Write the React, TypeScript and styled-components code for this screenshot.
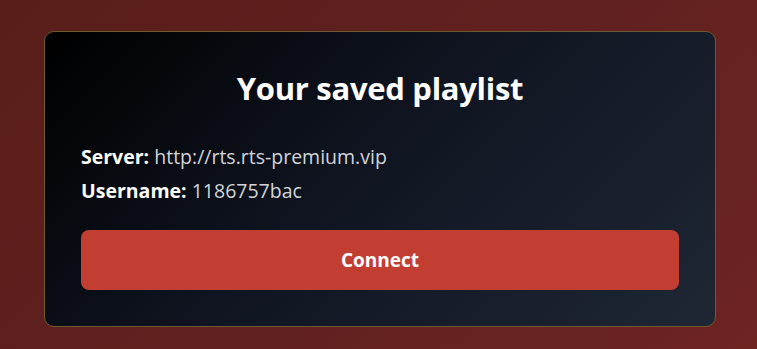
import React from 'react';
import styled, { createGlobalStyle } from 'styled-components';

const GlobalStyle = createGlobalStyle`
  html, body {
    margin: 0;
    padding: 0;
    height: 100%;
  }
  body {
    background: linear-gradient(135deg, #591e1a 0%, #612120 55%, #6e2421 100%);
    font-family: "Open Sans", "Noto Sans", sans-serif;
  }
`;

const Page = styled.div`
  min-height: 349px;
  box-sizing: border-box;
  padding: 31px 41px 0 44px;
`;

const Card = styled.section`
  box-sizing: border-box;
  width: 672px;
  height: 296px;
  padding: 36px 36px 36px;
  border: 1px solid #6e5a2c;
  border-radius: 10px;
  background: linear-gradient(135deg, #000000 0%, #0f1420 45%, #1f2734 100%);
  display: flex;
  flex-direction: column;
`;

const Title = styled.h1`
  margin: 0 0 35px;
  text-align: center;
  color: #ffffff;
  font-size: 31px;
  line-height: 40px;
  font-weight: 700;
  letter-spacing: -0.3px;
`;

const InfoList = styled.div`
  display: flex;
  flex-direction: column;
  gap: 6px;
  margin-bottom: 25px;
`;

const InfoRow = styled.p`
  margin: 0;
  font-size: 19.5px;
  line-height: 28px;
  color: #d1d5db;
`;

const Label = styled.strong`
  color: #ffffff;
  font-weight: 700;
`;

const ConnectButton = styled.button`
  height: 60px;
  width: 100%;
  border: none;
  border-radius: 8px;
  background: #c23e32;
  color: #ffffff;
  font-family: inherit;
  font-size: 19px;
  font-weight: 700;
  cursor: pointer;
`;

export default function App() {
  return (
    <>
      <GlobalStyle />
      <Page>
        <Card>
          <Title>Your saved playlist</Title>
          <InfoList>
            <InfoRow>
              <Label>Server:</Label> http://rts.rts-premium.vip
            </InfoRow>
            <InfoRow>
              <Label>Username:</Label> 1186757bac
            </InfoRow>
          </InfoList>
          <ConnectButton>Connect</ConnectButton>
        </Card>
      </Page>
    </>
  );
}
